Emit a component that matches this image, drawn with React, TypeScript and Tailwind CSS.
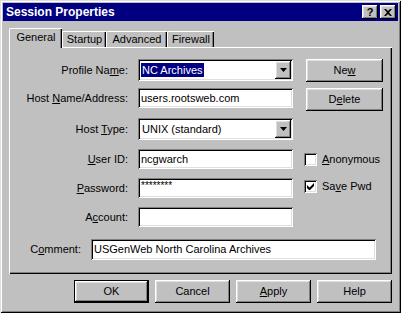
import React from "react";

const raised =
  "shadow-[inset_-1px_-1px_0_#000,inset_1px_1px_0_#fff,inset_-2px_-2px_0_#808080,inset_2px_2px_0_#dfdfdf]";
const sunken =
  "shadow-[inset_1px_1px_0_#808080,inset_-1px_-1px_0_#fff,inset_2px_2px_0_#000,inset_-2px_-2px_0_#dfdfdf]";

function U({ children }: { children: React.ReactNode }) {
  return <span className="underline underline-offset-[1px]">{children}</span>;
}

function Label({ w, children }: { w: string; children: React.ReactNode }) {
  return <div className={`${w} shrink-0 text-right leading-none`}>{children}</div>;
}

function TextBox({ w, h = "h-[20px]", value = "", small = false }: { w: string; h?: string; value?: string; small?: boolean }) {
  return (
    <div className={`${w} ${h} ${sunken} bg-white flex items-center pl-[3px] shrink-0`}>
      <span className={small ? "text-[10px] leading-none -mt-[5px]" : "leading-none"}>{value}</span>
    </div>
  );
}

function Combo({ value, selected = false }: { value: string; selected?: boolean }) {
  return (
    <div className={`w-[155px] h-[22px] ${sunken} bg-white flex items-center shrink-0 pl-[3px] pr-[2px]`}>
      <span className={`flex-1 leading-none ${selected ? "" : "pl-px"}`}>
        <span className={selected ? "bg-[#000080] text-white px-px py-[1px]" : ""}>{value}</span>
      </span>
      <div className={`w-[16px] h-[18px] bg-[#c0c0c0] ${raised} flex items-center justify-center`}>
        <svg width="7" height="4" viewBox="0 0 7 4">
          <path d="M0 0h7L3.5 4z" fill="#000" />
        </svg>
      </div>
    </div>
  );
}

function Btn({ children, w = "w-[75px]", h = "h-[23px]", def = false }: { children: React.ReactNode; w?: string; h?: string; def?: boolean }) {
  if (def) {
    return (
      <div className={`${w} ${h} border border-black flex`}>
        <div className={`flex-1 ${raised} bg-[#c0c0c0] flex items-center justify-center leading-none`}>{children}</div>
      </div>
    );
  }
  return (
    <div className={`${w} ${h} ${raised} bg-[#c0c0c0] flex items-center justify-center leading-none shrink-0`}>
      {children}
    </div>
  );
}

function Check({ checked = false }: { checked?: boolean }) {
  return (
    <div className={`w-[13px] h-[13px] ${sunken} bg-white flex items-center justify-center shrink-0`}>
      {checked && (
        <svg width="7" height="7" viewBox="0 0 7 7">
          <path d="M0 2v3l2 2h1l4-4V0L2.5 4.5z" fill="#000" />
        </svg>
      )}
    </div>
  );
}

export default function App() {
  return (
    <div
      className="w-[401px] h-[313px] bg-[#c0c0c0] p-[3px] flex flex-col text-[11px] text-black shadow-[inset_1px_1px_0_#dfdfdf,inset_-1px_-1px_0_#000,inset_2px_2px_0_#fff,inset_-2px_-2px_0_#808080]"
      style={{ fontFamily: '"Liberation Sans", Arial, sans-serif' }}
    >
      {/* Title bar */}
      <div className="h-[18px] bg-[#000080] flex items-center justify-between pl-[3px] pr-[2px]">
        <span className="text-white font-bold text-[12px] leading-none">Session Properties</span>
        <div className="flex gap-[2px]">
          <div className={`w-[16px] h-[14px] ${raised} bg-[#c0c0c0] flex items-center justify-center font-bold text-[11px] leading-none`}>?</div>
          <div className={`w-[16px] h-[14px] ${raised} bg-[#c0c0c0] flex items-center justify-center`}>
            <svg width="8" height="7" viewBox="0 0 8 7">
              <path d="M0 0h2l2 2 2-2h2L5 3.5 8 7H6L4 5 2 7H0l3-3.5z" fill="#000" />
            </svg>
          </div>
        </div>
      </div>

      {/* Tabs */}
      <div className="mt-[7px] ml-[6px] h-[19px] flex items-end">
        <div className="relative z-10 w-[53px] h-[20px] -mb-px bg-[#c0c0c0] border-l border-t border-white rounded-tl-[2px] shadow-[inset_-1px_0_0_#000,inset_-2px_0_0_#808080] flex justify-center pt-[3px] leading-none">
          General
        </div>
        <div className="w-[44px] h-[16px] border-l border-t border-white shadow-[inset_-1px_0_0_#000,inset_-2px_0_0_#808080] flex justify-center pt-[2px] leading-none">
          Startup
        </div>
        <div className="w-[61px] h-[16px] border-l border-t border-white rounded-tl-[2px] shadow-[inset_-1px_0_0_#000,inset_-2px_0_0_#808080] flex justify-center pt-[2px] leading-none">
          Advanced
        </div>
        <div className="w-[47px] h-[16px] border-l border-t border-white rounded-tl-[2px] shadow-[inset_-1px_0_0_#000,inset_-2px_0_0_#808080] flex justify-center pt-[2px] leading-none">
          Firewall
        </div>
      </div>

      {/* Panel */}
      <div className="mx-[6px] h-[227px] shadow-[inset_1px_1px_0_#fff,inset_-1px_-1px_0_#000,inset_-2px_-2px_0_#808080] flex flex-col pt-[12px]">
        <div className="flex items-start h-[23px]">
          <div className="h-[22px] flex items-center"><Label w="w-[119px]">Profile Na<U>m</U>e:</Label></div>
          <div className="ml-[10px]"><Combo value="NC Archives" selected /></div>
          <div className="ml-[13px]"><Btn w="w-[77px]">Ne<U>w</U></Btn></div>
        </div>
        <div className="flex items-start h-[23px] mt-[6px]">
          <div className="h-[20px] flex items-center"><Label w="w-[119px]">Host <U>N</U>ame/Address:</Label></div>
          <div className="ml-[10px]"><TextBox w="w-[155px]" value="users.rootsweb.com" /></div>
          <div className="ml-[13px]"><Btn w="w-[77px]">D<U>e</U>lete</Btn></div>
        </div>
        <div className="flex items-start h-[22px] mt-[7px]">
          <div className="h-[22px] flex items-center"><Label w="w-[119px]">Host <U>T</U>ype:</Label></div>
          <div className="ml-[10px]"><Combo value="UNIX (standard)" /></div>
        </div>
        <div className="flex items-center h-[20px] mt-[9px]">
          <Label w="w-[119px]"><U>U</U>ser ID:</Label>
          <div className="ml-[10px]"><TextBox w="w-[155px]" value="ncgwarch" /></div>
          <div className="ml-[11px] flex items-center gap-[5px] leading-none">
            <Check />
            <span><U>A</U>nonymous</span>
          </div>
        </div>
        <div className="flex items-center h-[20px] mt-[9px]">
          <Label w="w-[119px]"><U>P</U>assword:</Label>
          <div className="ml-[10px]"><TextBox w="w-[155px]" value="********" small /></div>
          <div className="ml-[11px] flex items-center gap-[5px] leading-none -mt-[3px]">
            <Check checked />
            <span>Sa<U>v</U>e Pwd</span>
          </div>
        </div>
        <div className="flex items-center h-[20px] mt-[9px]">
          <Label w="w-[119px]">A<U>c</U>count:</Label>
          <div className="ml-[10px]"><TextBox w="w-[155px]" /></div>
        </div>
        <div className="flex items-center h-[21px] mt-[12px]">
          <Label w="w-[72px]">C<U>o</U>mment:</Label>
          <div className="ml-[10px]"><TextBox w="w-[285px]" h="h-[21px]" value="USGenWeb North Carolina Archives" /></div>
        </div>
      </div>

      {/* Bottom buttons */}
      <div className="mt-[6px] mr-[6px] flex justify-end gap-[6px]">
        <Btn def>OK</Btn>
        <Btn>Cancel</Btn>
        <Btn><U>A</U>pply</Btn>
        <Btn>Help</Btn>
      </div>
    </div>
  );
}
